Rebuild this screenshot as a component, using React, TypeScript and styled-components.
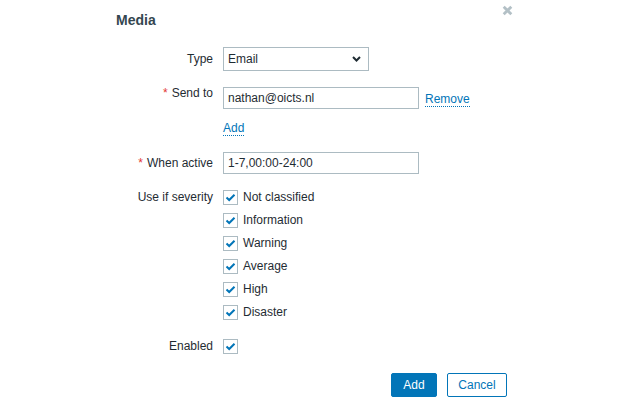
import React from 'react';
import styled, { createGlobalStyle } from 'styled-components';

const GlobalStyle = createGlobalStyle`
  html, body {
    margin: 0;
    padding: 0;
    background: #ffffff;
  }
  body {
    font-family: "Liberation Sans", Arial, sans-serif;
    font-size: 12px;
    line-height: 14px;
    color: #1f2c33;
  }
`;

const Dialog = styled.div`
  position: relative;
  width: 424px;
  margin: 0 auto;
  padding-bottom: 9px;
`;

const Header = styled.div`
  padding: 12px 16px 0;
`;

const Title = styled.h4`
  margin: 0;
  font-size: 14px;
  line-height: 16px;
  font-weight: bold;
  color: #34464f;
`;

const CloseButton = styled.button`
  position: absolute;
  top: 5px;
  right: 11px;
  width: 11px;
  height: 11px;
  padding: 0;
  border: 0;
  background: none;
  display: flex;
  cursor: pointer;
`;

const Form = styled.div`
  margin-top: 19px;
  display: flex;
  flex-direction: column;
`;

const Row = styled.div<{ gap: number }>`
  display: grid;
  grid-template-columns: 113px 1fr;
  column-gap: 10px;
  align-items: start;
  margin-top: ${({ gap }) => gap}px;
`;

const Label = styled.label<{ offset?: number; required?: boolean }>`
  text-align: right;
  white-space: nowrap;
  padding-top: ${({ offset }) => offset ?? 0}px;

  &::before {
    content: ${({ required }) => (required ? "'*'" : 'none')};
    color: #e33734;
    margin-right: 4px;
  }
`;

const Field = styled.div`
  display: flex;
  flex-direction: column;
  align-items: flex-start;
`;

const SelectBox = styled.div`
  box-sizing: border-box;
  width: 146px;
  height: 24px;
  border: 1px solid #acbbc2;
  padding: 0 7px 0 4px;
  display: flex;
  align-items: center;
  justify-content: space-between;
  background: #fff;
`;

const InputLine = styled.div<{ shift?: number }>`
  display: flex;
  align-items: center;
  margin-top: ${({ shift }) => shift ?? 0}px;
`;

const TextInput = styled.div`
  box-sizing: border-box;
  width: 196px;
  height: 22px;
  border: 1px solid #acbbc2;
  padding: 0 4px;
  display: flex;
  align-items: center;
  background: #fff;
`;

const Link = styled.span`
  color: #0275b8;
  border-bottom: 1px dotted #0275b8;
  cursor: pointer;
`;

const InlineLink = styled(Link)`
  margin-left: 6px;
  margin-top: 2px;
`;

const AddLine = styled.div`
  margin-top: 12px;
`;

const CheckList = styled.div`
  display: flex;
  flex-direction: column;
  gap: 8px;
`;

const CheckItem = styled.div`
  display: flex;
  align-items: flex-start;
  height: 15px;
`;

const Box = styled.span`
  box-sizing: border-box;
  width: 15px;
  height: 15px;
  border: 1px solid #acbbc2;
  display: flex;
  align-items: center;
  justify-content: center;
  background: #fff;
  flex-shrink: 0;
`;

const CheckText = styled.span`
  margin-left: 5px;
`;

const Footer = styled.div`
  display: flex;
  justify-content: flex-end;
  gap: 10px;
  margin-top: 19px;
  padding-right: 17px;
`;

const Button = styled.button<{ primary?: boolean }>`
  box-sizing: border-box;
  height: 24px;
  padding: 0;
  width: ${({ primary }) => (primary ? 46 : 60)}px;
  border: 1px solid #0275b8;
  border-radius: 2px;
  background: ${({ primary }) => (primary ? '#0275b8' : '#ffffff')};
  color: ${({ primary }) => (primary ? '#ffffff' : '#0275b8')};
  font-family: "Liberation Sans", Arial, sans-serif;
  font-size: 12px;
  line-height: 14px;
  cursor: pointer;
`;

const Check = () => (
  <Box>
    <svg width="11" height="9" viewBox="0 0 11 9">
      <polyline points="1.5,4.5 4.2,7 9.5,1.8" fill="none" stroke="#0275b8" strokeWidth="2" />
    </svg>
  </Box>
);

const severities = ['Not classified', 'Information', 'Warning', 'Average', 'High', 'Disaster'];

export default function App() {
  return (
    <>
      <GlobalStyle />
      <Dialog>
        <Header>
          <Title>Media</Title>
        </Header>
        <CloseButton aria-label="Close">
          <svg width="11" height="11" viewBox="0 0 11 11">
            <path d="M1.7 1.7 L9.3 9.3 M9.3 1.7 L1.7 9.3" stroke="#b3c0c6" strokeWidth="2.8" />
          </svg>
        </CloseButton>
        <Form>
          <Row gap={0}>
            <Label offset={5}>Type</Label>
            <Field>
              <SelectBox>
                <span>Email</span>
                <svg width="9" height="6" viewBox="0 0 9 6">
                  <polyline points="1,1 4.5,4.5 8,1" fill="none" stroke="#1f2c33" strokeWidth="2" />
                </svg>
              </SelectBox>
            </Field>
          </Row>
          <Row gap={15}>
            <Label required>Send to</Label>
            <Field>
              <InputLine shift={1}>
                <TextInput>nathan@oicts.nl</TextInput>
                <InlineLink>Remove</InlineLink>
              </InputLine>
              <AddLine>
                <Link>Add</Link>
              </AddLine>
            </Field>
          </Row>
          <Row gap={17}>
            <Label required offset={4}>When active</Label>
            <Field>
              <TextInput>1-7,00:00-24:00</TextInput>
            </Field>
          </Row>
          <Row gap={16}>
            <Label>Use if severity</Label>
            <CheckList>
              {severities.map((s) => (
                <CheckItem key={s}>
                  <Check />
                  <CheckText>{s}</CheckText>
                </CheckItem>
              ))}
            </CheckList>
          </Row>
          <Row gap={19}>
            <Label>Enabled</Label>
            <Field>
              <Check />
            </Field>
          </Row>
        </Form>
        <Footer>
          <Button primary>Add</Button>
          <Button>Cancel</Button>
        </Footer>
      </Dialog>
    </>
  );
}
